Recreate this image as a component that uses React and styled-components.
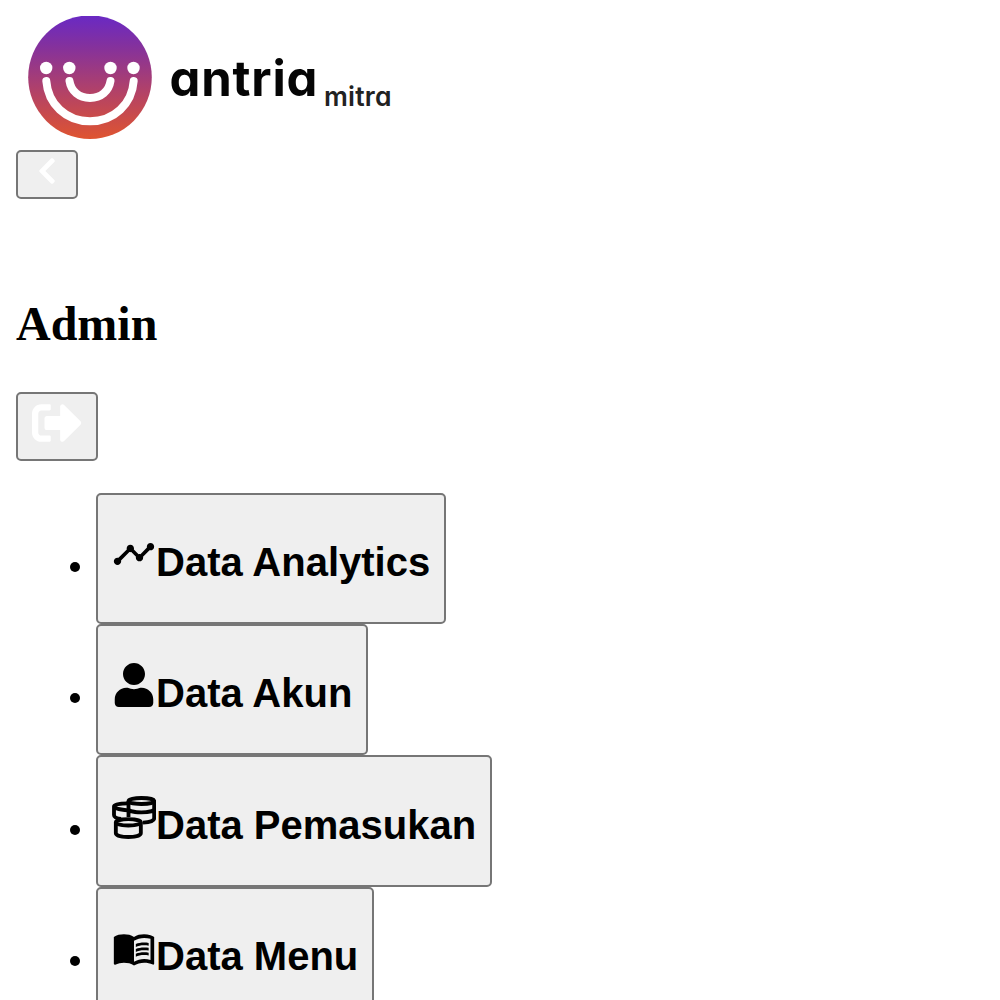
import React from "react";
import styled, { createGlobalStyle } from "styled-components";
import { FaChevronLeft, FaSignOutAlt, FaUser } from "react-icons/fa";
import { MdTimeline, MdMenuBook } from "react-icons/md";

const GlobalStyle = createGlobalStyle`
  html { overflow: hidden; }
  body {
    margin: 0;
    background: #fff;
    color: #000;
    font-family: "Liberation Serif", "Times New Roman", serif;
    font-size: 32px;
  }
`;

const Page = styled.main`
  display: flex;
  flex-direction: column;
  align-items: flex-start;
  height: 1000px;
  box-sizing: border-box;
  padding: 16px;
  overflow: hidden;
`;

const Logo = styled.svg`
  display: block;
  flex: none;
  width: 384px;
  height: 134px;
`;

const LogoText = styled.text`
  font-family: Inter, "Open Sans", sans-serif;
  font-feature-settings: "cv11" 1;
  font-size: ${(p) => p.$size}px;
  font-weight: ${(p) => p.$weight};
  fill: ${(p) => p.$color};
`;

const Button = styled.button`
  display: block;
  flex: none;
  box-sizing: border-box;
  height: ${(p) => p.$height}px;
  margin: 0;
  padding: 4px 14px;
  border: 2px solid #767676;
  border-radius: 5px;
  background: #efefef;
  color: ${(p) => p.$color || "#000"};
  font: 26.667px "Liberation Sans", Arial, sans-serif;
  text-align: center;
  white-space: nowrap;
`;

const IconButton = styled(Button)`
  display: flex;
  align-items: flex-start;
`;

const UserName = styled.h2`
  flex: none;
  margin: 97px 0 41px;
  font-size: 48px;
  line-height: 55px;
`;

const Menu = styled.ul`
  flex: none;
  margin: 32px 0;
  padding: 0 0 0 80px;
`;

const MenuItem = styled.li`
  height: 131.2px;
`;

const MenuButton = styled(Button)`
  display: inline-block;
`;

const MenuLabel = styled.h2`
  margin: 33.2px 0;
  font-size: 40px;
  line-height: normal;
`;

function CoinStacks({ size }) {
  return (
    <svg width={size} height={size} viewBox="0 0 132 132" fill="none" stroke="currentColor" strokeWidth="11.5">
      <ellipse cx="88" cy="18" rx="38.5" ry="9" />
      <path d="M49.500 18V66M126.500 18V70C126.500 77 113 82 93 83M49.500 41C49.500 56 126.500 56 126.500 41" />
      <path d="M49 25C25 25 6 28 6 34S25 45 49 46M6 34V60C6 66 13 70 27 72" />
      <ellipse cx="49" cy="82" rx="37.500" ry="9.500" />
      <path d="M11.500 82V114C11.500 130 86.500 130 86.500 114V82" />
    </svg>
  );
}

const items = [
  { label: "Data Analytics", Icon: MdTimeline },
  { label: "Data Akun", Icon: FaUser },
  { label: "Data Pemasukan", Icon: CoinStacks },
  { label: "Data Menu", Icon: MdMenuBook },
];

function BrandLogo() {
  return (
    <Logo viewBox="16 16 384 134" role="img" aria-label="antria mitra">
      <defs>
        <linearGradient id="brand" x1="0" y1="0" x2="0" y2="1">
          <stop offset="0" stopColor="#6929c4" />
          <stop offset="0.25" stopColor="#84319d" />
          <stop offset="0.6" stopColor="#b0416a" />
          <stop offset="1" stopColor="#df5430" />
        </linearGradient>
      </defs>
      <circle cx="90" cy="77.200" r="61.800" fill="url(#brand)" />
      <g fill="#fff">
        <circle cx="46.2" cy="68" r="6.2" />
        <circle cx="69.3" cy="68" r="6.2" />
        <circle cx="110.5" cy="68" r="6.2" />
        <circle cx="133.5" cy="68" r="6.2" />
      </g>
      <g fill="none" stroke="#fff" strokeWidth="8" strokeLinecap="round">
        <path d="M46.3 81C48 104 66 121.300 90 121.300S132 104 133.700 81" />
        <path d="M69.500 81C71 91 79 98 90 98S109 91 110.500 81" />
      </g>
      <LogoText x="169.500" y="96" textLength="148" $size={49} $weight={700} $color="#050505">antria</LogoText>
      <LogoText x="324" y="106" textLength="67.500" $size={26.5} $weight={600} $color="#222">mitra</LogoText>
    </Logo>
  );
}

export default function App() {
  return (
    <>
      <GlobalStyle />
      <Page>
        <BrandLogo />
        <IconButton $height={49} $color="#fff" aria-label="Back">
          <FaChevronLeft size={30} />
        </IconButton>
        <UserName>Admin</UserName>
        <IconButton $height={69} $color="#fff" aria-label="Log out">
          <FaSignOutAlt size={50} />
        </IconButton>
        <Menu>
          {items.map(({ label, Icon }) => (
            <MenuItem key={label}>
              <MenuButton $height={131.2}>
                <MenuLabel>
                  <Icon size={44} />
                  {label}
                </MenuLabel>
              </MenuButton>
            </MenuItem>
          ))}
        </Menu>
      </Page>
    </>
  );
}
